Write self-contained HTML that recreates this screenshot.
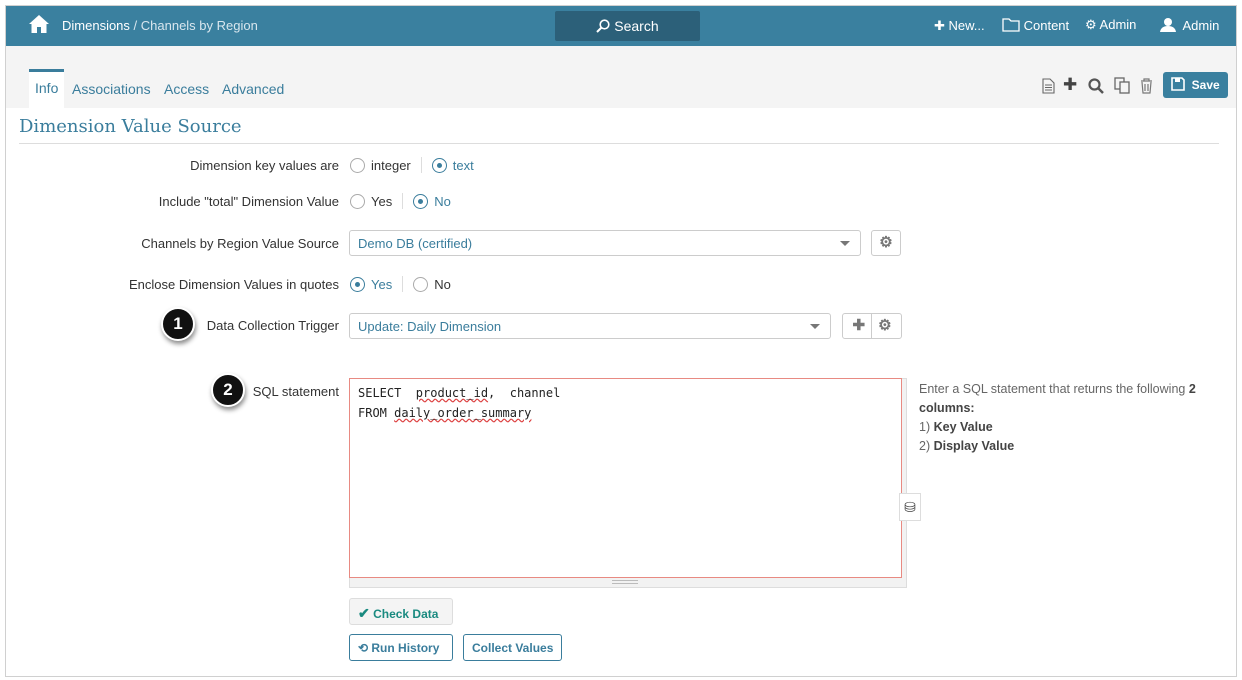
<!DOCTYPE html>
<html><head><meta charset="utf-8"><style>
*{box-sizing:border-box}
body{margin:0;width:1242px;height:680px;background:#fff;font-family:"Liberation Sans",sans-serif;position:relative;overflow:hidden}
.frame{position:absolute;left:5px;top:5px;width:1232px;height:672px;border:1px solid #d0d0d0}
.top{position:absolute;left:6px;top:6px;width:1230px;height:40px;background:#3a809f;color:#fff;font-size:13px}
.gray{position:absolute;left:6px;top:46px;width:1230px;height:62px;background:#f4f4f4}
.abs{position:absolute}
.lbl{position:absolute;right:903px;font-size:13px;color:#333;white-space:nowrap}
.rad{position:absolute;font-size:13px;color:#333;display:flex;align-items:center;white-space:nowrap}
.rc{width:15px;height:15px;border:1px solid #aaa;border-radius:50%;display:inline-block;margin-right:6px;position:relative}
.rc.on{border-color:#3a7d9c}
.rc.on:after{content:"";position:absolute;left:4px;top:4px;width:5px;height:5px;border-radius:50%;background:#3a7d9c}
.sep{display:inline-block;width:1px;height:16px;background:#ddd;margin:0 10px}
.sel{position:absolute;height:26px;border:1px solid #ccc;border-radius:3px;font-size:13px;color:#3a7d9c;padding:5px 8px}
.sel:after{content:"";position:absolute;right:10px;top:10px;border:5px solid transparent;border-top-color:#777;border-bottom:0}
.btn{position:absolute;border:1px solid #ccc;border-radius:3px;background:#fff;color:#777;text-align:center;font-size:15px;font-weight:bold}
.badge{position:absolute;width:34px;height:34px;border-radius:50%;background:#111;color:#fff;font-weight:bold;font-size:17px;text-align:center;line-height:30px;box-shadow:1px 3px 5px rgba(0,0,0,.45);border:2px solid #fff}
.b2{position:absolute;height:27px;border:1px solid #3a7d9c;border-radius:3px;color:#3a7d9c;font-size:12px;font-weight:bold;padding:6px 8px;white-space:nowrap}
</style></head><body>
<div class="frame"></div>
<div class="top">
 <svg class="abs" style="left:22px;top:8px" width="22" height="20" viewBox="0 0 22 20"><path d="M11 1 L1 10 L3.5 10 L3.5 19 L9 19 L9 13 L13 13 L13 19 L18.5 19 L18.5 10 L21 10 Z" fill="#fff"/></svg>
 <div class="abs" style="left:56px;top:12px">Dimensions <span style="color:#d8e6ee">/ Channels by Region</span></div>
 <div class="abs" style="left:549px;top:5px;width:145px;height:30px;background:#2c6079;border-radius:2px;text-align:center;line-height:30px;font-size:14px"><svg width="14" height="14" style="vertical-align:-2px"><circle cx="8.5" cy="5.5" r="4.3" fill="none" stroke="#fff" stroke-width="1.6"/><path d="M5.5 8.5L1 13" stroke="#fff" stroke-width="2"/></svg> Search</div>
 <div class="abs" style="left:928px;top:12px">✚ New...</div>
 <div class="abs" style="left:996px;top:12px"><svg width="18" height="14" style="vertical-align:-2px"><path d="M1 1h6l2 2h8v10H1z" fill="none" stroke="#fff" stroke-width="1.3"/></svg> Content</div>
 <div class="abs" style="left:1079px;top:11px">⚙ Admin</div>
 <div class="abs" style="left:1154px;top:11px"><svg width="16" height="15" style="vertical-align:-2px"><circle cx="8" cy="5" r="4" fill="#fff"/><path d="M0 15 Q1 9 8 9 Q15 9 16 15z" fill="#fff"/></svg>&nbsp; Admin</div>
</div>
<div class="gray"></div>
<div class="abs" style="left:29px;top:69px;width:35px;height:40px;background:#fff;border-top:3px solid #3a7d9c"></div>
<div class="abs" style="left:35px;top:80px;font-size:14px;color:#3a7d9c">Info</div>
<div class="abs" style="left:72px;top:81px;font-size:14px;color:#3a7d9c">Associations</div>
<div class="abs" style="left:164px;top:81px;font-size:14px;color:#3a7d9c">Access</div>
<div class="abs" style="left:222px;top:81px;font-size:14px;color:#3a7d9c">Advanced</div>
<svg class="abs" style="left:1042px;top:78px" width="13" height="16"><path d="M1 1h7l4 4v10H1z M3 7h7M3 9.5h7M3 12h7" fill="none" stroke="#666" stroke-width="1.1"/></svg>
<div class="abs" style="left:1063px;top:75px;font-size:17px;color:#444">✚</div>
<svg class="abs" style="left:1088px;top:78px" width="16" height="16"><circle cx="6.5" cy="6.5" r="5" fill="none" stroke="#555" stroke-width="2.2"/><path d="M10 10l5 5" stroke="#555" stroke-width="2.5"/></svg>
<svg class="abs" style="left:1114px;top:77px" width="16" height="17"><rect x="1" y="1" width="9" height="11" fill="none" stroke="#666" stroke-width="1.3"/><rect x="6" y="5" width="9" height="11" fill="#f4f4f4" stroke="#666" stroke-width="1.3"/></svg>
<svg class="abs" style="left:1140px;top:78px" width="13" height="16"><path d="M1 3h11M4 3V1h5v2M2 4l1 11h7l1-11M5 6v7M8 6v7" fill="none" stroke="#777" stroke-width="1.2"/></svg>
<div class="abs" style="left:1163px;top:72px;width:65px;height:26px;background:#3a809f;border-radius:3px;color:#fff;font-weight:bold;font-size:12px;line-height:26px;padding-left:8px"><svg width="14" height="14" style="vertical-align:-2px"><path d="M1 1h10l2 2v10H1z" fill="none" stroke="#fff" stroke-width="1.6"/><rect x="4" y="1" width="5" height="4" fill="#fff"/></svg>&nbsp; Save</div>
<div class="abs" style="left:19px;top:116px;font-family:'DejaVu Serif','Liberation Serif',serif;font-size:18px;color:#3a7d9c">Dimension Value Source</div>
<div class="abs" style="left:19px;top:143px;width:1200px;height:1px;background:#ddd"></div>

<div class="lbl" style="top:158px">Dimension key values are</div>
<div class="rad" style="left:350px;top:157px"><span class="rc"></span>integer<span class="sep"></span><span class="rc on"></span><span style="color:#3a7d9c">text</span></div>
<div class="lbl" style="top:194px">Include "total" Dimension Value</div>
<div class="rad" style="left:350px;top:193px"><span class="rc"></span>Yes<span class="sep"></span><span class="rc on"></span><span style="color:#3a7d9c">No</span></div>
<div class="lbl" style="top:236px">Channels by Region Value Source</div>
<div class="sel" style="left:349px;top:230px;width:512px">Demo DB (certified)</div>
<div class="btn" style="left:871px;top:230px;width:30px;height:26px;line-height:24px">⚙</div>
<div class="lbl" style="top:277px">Enclose Dimension Values in quotes</div>
<div class="rad" style="left:350px;top:276px"><span class="rc on"></span><span style="color:#3a7d9c">Yes</span><span class="sep"></span><span class="rc"></span>No</div>
<div class="badge" style="left:161px;top:307px">1</div>
<div class="lbl" style="top:318px">Data Collection Trigger</div>
<div class="sel" style="left:349px;top:313px;width:482px">Update: Daily Dimension</div>
<div class="btn" style="left:842px;top:313px;width:60px;height:26px;line-height:24px">✚<span style="display:inline-block;width:1px;height:24px;background:#ccc;vertical-align:top;margin:0 6px"></span>⚙</div>
<div class="badge" style="left:211px;top:373px">2</div>
<div class="lbl" style="top:384px">SQL statement</div>
<div class="abs" style="left:349px;top:378px;width:558px;height:210px;border:1px solid #ddd;background:#f2f2f2"></div>
<div class="abs" style="left:349px;top:378px;width:553px;height:200px;border:1px solid #e88a82;background:#fff;font-family:'DejaVu Sans Mono','Liberation Mono',monospace;font-size:12px;color:#222;padding:4px 8px;line-height:20px;white-space:pre">SELECT  <span style="text-decoration:underline wavy #d44">product_id</span>,  channel
FROM <span style="text-decoration:underline wavy #d44">daily_order_summary</span></div>
<div class="abs" style="left:612px;top:580px;width:26px;height:4px;border-top:1px solid #bbb;border-bottom:1px solid #bbb"></div>
<div class="abs" style="left:899px;top:493px;width:22px;height:28px;border:1px solid #ddd;background:#fff;font-size:14px;text-align:center;line-height:26px;color:#444">⛁</div>
<div class="abs" style="left:919px;top:380px;font-size:12.5px;color:#666;line-height:19px;width:300px">Enter a SQL statement that returns the following <b style="color:#444">2 columns:</b><br>1) <b style="color:#444">Key Value</b><br>2) <b style="color:#444">Display Value</b></div>
<div class="abs" style="left:349px;top:598px;width:104px;height:27px;border:1px solid #ddd;border-radius:3px;background:#f4f4f4;color:#1a8a80;font-size:12px;font-weight:bold;padding:6px 8px"><span style="font-size:14px">✔</span> Check Data</div>
<div class="b2" style="left:349px;top:634px;width:104px">⟲ Run History</div>
<div class="b2" style="left:463px;top:634px">Collect Values</div>
</body></html>
